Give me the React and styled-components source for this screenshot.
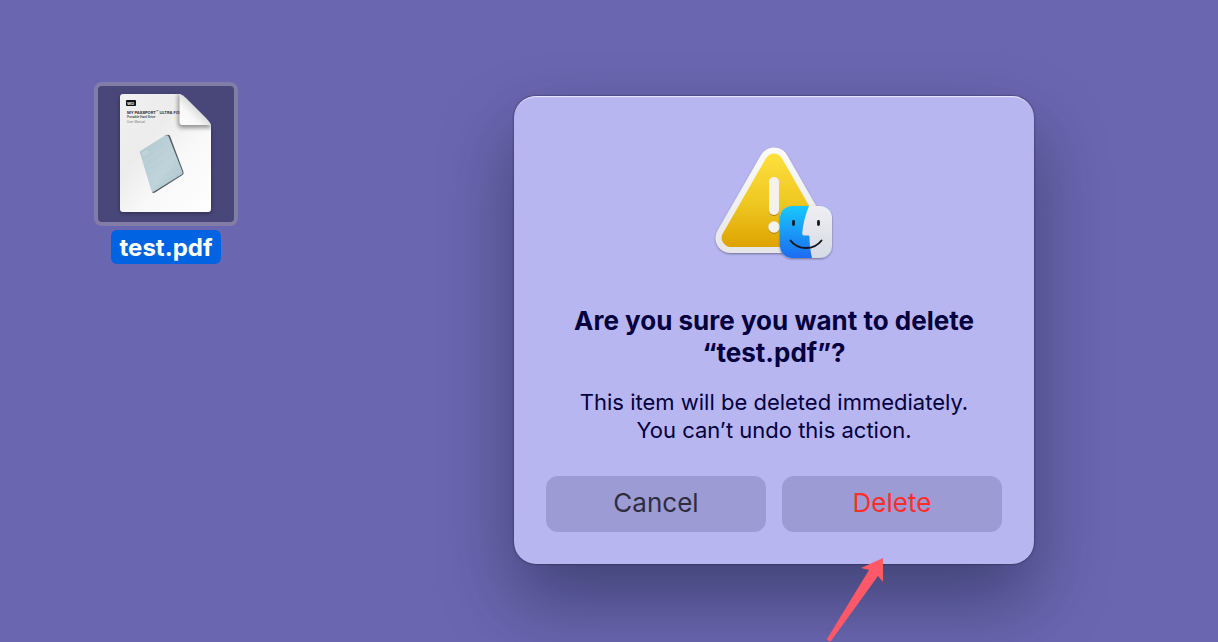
import React, {useState} from "react";
import styled, {createGlobalStyle} from "styled-components";

const GlobalStyle = createGlobalStyle`
  *, *::before, *::after {
    box-sizing: border-box;
  }

  body {
    margin: 0;
    background: #6a66b0;
    font-family: Inter, "Liberation Sans", sans-serif;
  }
`;

// region elements
const Desktop = styled.main`
  display: flex;
  align-items: flex-start;
  gap: 276px;
  min-height: 100vh;
  padding: 82px 94px 78px;
  overflow: hidden;
`;

const FileItem = styled.figure`
  flex: none;
  display: flex;
  flex-direction: column;
  align-items: center;
  gap: 4px;
  margin: 0;
`;

const FilePreview = styled.div`
  border: 4px solid #817da6;
  border-radius: 8px;
  background: #494779;

  svg {
    display: block;
  }
`;

const FileName = styled.figcaption`
  padding: 1px 9px 0;
  border-radius: 6px;
  background: #0063e1;
  color: #fff;
  font-size: 24px;
  font-weight: 700;
  line-height: 33px;
`;

const Dialog = styled.section`
  position: relative;
  flex: 0 1 520px;
  display: flex;
  flex-direction: column;
  align-items: center;
  margin-top: 14px;
  padding: 44px 32px 32px;
  border-radius: 22px;
  background: #b8b6f1;
  color: #03003d;
  text-align: center;
  box-shadow: inset 0 2px 1px -1px rgba(255, 255, 255, 0.7),
    0 0 2px rgba(0, 0, 0, 0.7),
    0 36px 72px rgba(10, 20, 40, 0.42);
`;

const Title = styled.h1`
  max-width: 440px;
  margin: 37px 0 0;
  font-size: 26px;
  font-weight: 700;
  line-height: 32px;
`;

const Message = styled.p`
  margin: 19px 0 32px;
  font-size: 22px;
  line-height: 28px;
`;

const Actions = styled.div`
  display: grid;
  grid-template-columns: 1fr 1fr;
  gap: 16px;
  width: 100%;
`;

const DialogButton = styled.button`
  height: 56px;
  padding: 0 0 4px;
  border: 0;
  border-radius: 12px;
  background: #9d9bd4;
  color: ${({$destructive}) => $destructive ? "#ff2d27" : "#2e2d40"};
  font-family: inherit;
  font-size: 26px;
  cursor: pointer;

  &:active {
    background: #8d8bc4;
  }
`;

// Points at the Delete button, lies over the edge of the dialog
const Pointer = styled.svg`
  position: absolute;
  top: 460px;
  right: 148px;
  pointer-events: none;
`;
// endregion

const PdfThumbnail = () => (
    <svg width="136" height="136" viewBox="0 0 136 136" aria-hidden="true">
        <defs>
            <linearGradient id="paper" x1="0" y1="0" x2="1" y2="1">
                <stop offset="0" stopColor="#f1f1f1"/>
                <stop offset="0.35" stopColor="#ececec"/>
                <stop offset="0.6" stopColor="#f8f8f8"/>
                <stop offset="1" stopColor="#fff"/>
            </linearGradient>
            <linearGradient id="fold" x1="0" y1="1" x2="0.55" y2="0.45">
                <stop offset="0" stopColor="#fff"/>
                <stop offset="0.6" stopColor="#f7f7f7"/>
                <stop offset="1" stopColor="#dcdcdc"/>
            </linearGradient>
            <linearGradient id="drive" x1="0" y1="0" x2="1" y2="1">
                <stop offset="0" stopColor="#b2c8d0"/>
                <stop offset="0.6" stopColor="#bed3da"/>
                <stop offset="1" stopColor="#a9c2cb"/>
            </linearGradient>
            <clipPath id="page">
                <path d="M25 8H82L113 39V123Q113 126 110 126H25Q22 126 22 123V11Q22 8 25 8Z"/>
            </clipPath>
            <filter id="soft" x="-30%" y="-30%" width="160%" height="160%">
                <feGaussianBlur stdDeviation="2"/>
            </filter>
        </defs>
        <path d="M25 10H80L113 43V124Q113 127 110 127H25Q22 127 22 124V13Q22 10 25 10Z" fill="#000"
              opacity="0.4" filter="url(#soft)"/>
        <g clipPath="url(#page)">
            <path d="M22 8H113V126H22Z" fill="url(#paper)"/>
            <rect x="28" y="14" width="10" height="6" rx="1" fill="#111"/>
            <text x="29" y="19" fontSize="4" fontWeight="800" fill="#ddd">WD</text>
            <text x="29" y="28" fontSize="4" fontWeight="700" fill="#333">MY PASSPORT™ ULTRA FOR</text>
            <text x="29" y="32" fontSize="3" fontWeight="600" fill="#333">Portable Hard Drive</text>
            <text x="29" y="37" fontSize="3" fill="#777">User Manual</text>
            <path d="M67 49.500Q71 48 72 50L85.500 86Q86 88 84.500 89L57 106.500Q55 107.500 54 106Z"
                  fill="#555a63"/>
            <path d="M42 67Q41 65.500 43 64.500L67 49.500Q69.500 48.500 70.500 50.500L84.500 86Q85 88 83.500 88.500L56 105.500Q54.500 106.500 53.500 105Z"
                  fill="url(#drive)"/>
            <path d="M47 75L73 57M49 81L76 64M51 87L78 71M53 93L80 78M54 99L82 85" stroke="#cddde3"
                  strokeWidth="0.6" opacity="0.5"/>
            <path d="M45 67L49 65L50 67L46 69Z" fill="none" stroke="#d8e8ed" strokeWidth="0.5"/>
            <path d="M80 8V38Q80 42 84 42H113V39L82 8Z" fill="#000" opacity="0.4" filter="url(#soft)"/>
        </g>
        <path d="M82 8Q85 9 88 12L108 32Q112 36 113 39H84.500Q81.500 39 81.500 36V8Z" fill="url(#fold)"/>
    </svg>
);

const WarningIcon = () => (
    <svg width="128" height="128" viewBox="0 0 128 128" role="img" aria-label="Warning">
        <defs>
            <linearGradient id="frame" gradientUnits="userSpaceOnUse" x1="0" y1="7" x2="0" y2="113">
                <stop offset="0" stopColor="#fbfbfb"/>
                <stop offset="1" stopColor="#e6e6e6"/>
            </linearGradient>
            <linearGradient id="yellow" gradientUnits="userSpaceOnUse" x1="0" y1="13" x2="0" y2="107">
                <stop offset="0" stopColor="#fde13d"/>
                <stop offset="0.55" stopColor="#efc620"/>
                <stop offset="1" stopColor="#dea300"/>
            </linearGradient>
            <linearGradient id="blue" x1="0" y1="0" x2="0" y2="1">
                <stop offset="0" stopColor="#18c8fd"/>
                <stop offset="1" stopColor="#1c6bf1"/>
            </linearGradient>
            <linearGradient id="grey" x1="0" y1="0" x2="0" y2="1">
                <stop offset="0" stopColor="#f0eff2"/>
                <stop offset="1" stopColor="#d6dae3"/>
            </linearGradient>
            <clipPath id="face">
                <rect x="70" y="66" width="52" height="52" rx="12"/>
            </clipPath>
            <filter id="drop" x="-30%" y="-30%" width="160%" height="160%">
                <feDropShadow dx="0" dy="1" stdDeviation="1" floodColor="#000" floodOpacity="0.4"/>
            </filter>
            <filter id="markDrop" x="-50%" y="-20%" width="200%" height="140%">
                <feDropShadow dx="0" dy="1" stdDeviation="0.7" floodColor="#7a5200" floodOpacity="0.6"/>
            </filter>
        </defs>
        {/* the right corner is cut short, the Finder badge covers it */}
        <path d="M64 22.500L20.600 98H98V82Z" fill="url(#frame)" stroke="url(#frame)" strokeWidth="30"
              strokeLinejoin="round" filter="url(#drop)"/>
        <path d="M64 22.500L20.600 98H98V82Z" fill="url(#yellow)" stroke="url(#yellow)" strokeWidth="18"
              strokeLinejoin="round"/>
        <g fill="#f3f2f0" filter="url(#markDrop)">
            <rect x="59" y="37" width="10" height="38" rx="5"/>
            <circle cx="64" cy="87" r="5.700"/>
        </g>
        <rect x="70" y="66" width="52" height="52" rx="12" fill="#ddd" filter="url(#drop)"/>
        <g clipPath="url(#face)">
            <rect x="70" y="66" width="52" height="52" fill="url(#blue)"/>
            <path d="M99 66C95 75 93 85 92.200 93Q92 95.500 94 95.500H98.500Q99.500 95.500 99.500 97C99.500 104 100.500 112 102 118H122V66Z"
                  fill="url(#grey)"/>
        </g>
        <g fill="none" stroke="#15161c" strokeLinecap="round">
            <path d="M83.500 81.500V84.500M108.500 81.500V84.500" strokeWidth="2.800"/>
            <path d="M80.500 100.500C88 110.500 104 110.500 111.500 100.500" strokeWidth="1.900"/>
        </g>
    </svg>
);

const App = () => {
    const [open, setOpen] = useState(true);
    const close = () => setOpen(false);

    return (
        <>
            <GlobalStyle/>
            <Desktop>
                <FileItem>
                    <FilePreview>
                        <PdfThumbnail/>
                    </FilePreview>
                    <FileName>test.pdf</FileName>
                </FileItem>
                {open && (
                    <Dialog role="alertdialog" aria-labelledby="title" aria-describedby="message">
                        <WarningIcon/>
                        <Title id="title">Are you sure you want to delete “test.pdf”?</Title>
                        <Message id="message">
                            This item will be deleted immediately.<br/>
                            You can’t undo this action.
                        </Message>
                        <Actions>
                            <DialogButton type="button" onClick={close}>Cancel</DialogButton>
                            <DialogButton type="button" $destructive onClick={close}>Delete</DialogButton>
                        </Actions>
                        <Pointer width="62" height="88" viewBox="0 0 62 88" aria-hidden="true">
                            <path d="M59 2L37 12L45 14L3 83Q4 86 7 85L54 20L59 26Z" fill="#ff5868"/>
                        </Pointer>
                    </Dialog>
                )}
            </Desktop>
        </>
    );
};

export default App;
